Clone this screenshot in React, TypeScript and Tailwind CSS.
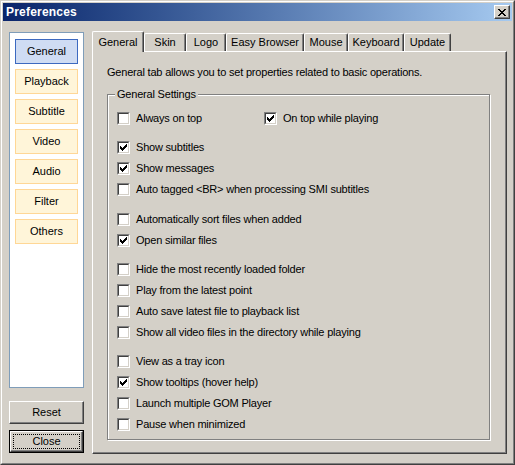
import React from 'react';

const FONT = { fontFamily: '"Liberation Sans", Arial, sans-serif' };

const sideItems = ['General', 'Playback', 'Subtitle', 'Video', 'Audio', 'Filter', 'Others'];

const tabs = [
  { label: 'General', w: 'w-[52px]' },
  { label: 'Skin', w: 'w-[42px]' },
  { label: 'Logo', w: 'w-[40px]' },
  { label: 'Easy Browser', w: 'w-[78px]' },
  { label: 'Mouse', w: 'w-[44px]' },
  { label: 'Keyboard', w: 'w-[56px]' },
  { label: 'Update', w: 'w-[47px]' },
];

// groups of checkbox rows, first row of first group holds two boxes
const groups: { label: string; checked: boolean }[][] = [
  [
    { label: 'Show subtitles', checked: true },
    { label: 'Show messages', checked: true },
    { label: 'Auto tagged <BR> when processing SMI subtitles', checked: false },
  ],
  [
    { label: 'Automatically sort files when added', checked: false },
    { label: 'Open similar files', checked: true },
  ],
  [
    { label: 'Hide the most recently loaded folder', checked: false },
    { label: 'Play from the latest point', checked: false },
    { label: 'Auto save latest file to playback list', checked: false },
    { label: 'Show all video files in the directory while playing', checked: false },
  ],
  [
    { label: 'View as a tray icon', checked: false },
    { label: 'Show tooltips (hover help)', checked: true },
    { label: 'Launch multiple GOM Player', checked: false },
    { label: 'Pause when minimized', checked: false },
  ],
];

function CheckBox({ checked }: { checked: boolean }) {
  return (
    <span className="w-[13px] h-[13px] shrink-0 border border-t-[#808080] border-l-[#808080] border-r-white border-b-white">
      <span className="flex w-full h-full items-center justify-center bg-white border border-t-[#404040] border-l-[#404040] border-r-[#d4d0c8] border-b-[#d4d0c8]">
        {checked && (
          <svg width="7" height="7" viewBox="0 0 7 7" shapeRendering="crispEdges">
            <path d="M0 2h1v3H0zM1 3h1v3H1zM2 4h1v3H2zM3 3h1v3H3zM4 2h1v3H4zM5 1h1v3H5zM6 0h1v3H6z" fill="#000" />
          </svg>
        )}
      </span>
    </span>
  );
}

function Row({ label, checked, className = '' }: { label: string; checked: boolean; className?: string }) {
  return (
    <div className={`flex h-[21px] items-center ${className}`}>
      <CheckBox checked={checked} />
      <span className="ml-[6px] text-[11px] leading-[13px] tracking-[-0.2px] text-black whitespace-nowrap">{label}</span>
    </div>
  );
}

export default function App() {
  return (
    <div style={FONT} className="w-[515px] h-[465px] bg-[#d4d0c8] border border-t-[#d4d0c8] border-l-[#d4d0c8] border-r-[#404040] border-b-[#404040]">
      <div className="h-full border border-t-white border-l-white border-r-[#808080] border-b-[#808080] p-[1px] flex flex-col">
        {/* Title bar */}
        <div className="h-[18px] flex items-center justify-between bg-gradient-to-r from-[#0a246a] to-[#a6caf0] pl-[3px] pr-[2px]">
          <span className="text-white font-bold text-[12px] leading-[14px] tracking-[0.2px]">Preferences</span>
          <button className="w-[16px] h-[14px] bg-[#d4d0c8] border border-t-white border-l-white border-r-[#404040] border-b-[#404040] shadow-[inset_-1px_-1px_0_#808080] flex items-center justify-center">
            <svg width="8" height="7" viewBox="0 0 8 7" shapeRendering="crispEdges">
              <path d="M0 0h2v1H0zM6 0h2v1H6zM1 1h2v1H1zM5 1h2v1H5zM2 2h4v1H2zM3 3h2v1H3zM2 4h4v1H2zM1 5h2v1H1zM5 5h2v1H5zM0 6h2v1H0zM6 6h2v1H6z" fill="#000" />
            </svg>
          </button>
        </div>

        {/* Body */}
        <div className="flex flex-1 pl-[6px] pr-[5px] pt-[10px]">
          {/* Left column */}
          <div className="w-[75px] flex flex-col mt-[1px]">
            <div className="h-[356px] bg-white border border-[#7f9db9] pt-[6px] px-[5px] flex flex-col gap-[5px]">
              {sideItems.map((item, i) => (
                <div
                  key={item}
                  className={`h-[25px] flex items-center justify-center text-[11px] text-black border ${
                    i === 0 ? 'bg-[#cfdcf3] border-[#3c69c0]' : 'bg-[#fff5d9] border-[#ffd796]'
                  }`}
                >
                  {item}
                </div>
              ))}
            </div>
            <button className="mt-[13px] h-[23px] bg-[#d4d0c8] border border-t-white border-l-white border-r-[#404040] border-b-[#404040] shadow-[inset_-1px_-1px_0_#808080] text-[11px] text-black">
              Reset
            </button>
            <button className="mt-[6px] h-[23px] bg-[#d4d0c8] border border-black p-0">
              <div className="h-full border border-t-white border-l-white border-r-[#404040] border-b-[#404040] shadow-[inset_-1px_-1px_0_#808080] p-[2px]">
                <div className="h-full border border-dotted border-black flex items-center justify-center text-[11px] text-black">
                  Close
                </div>
              </div>
            </button>
          </div>

          {/* Tab control */}
          <div className="ml-[8px] w-[415px] flex flex-col">
            <div className="h-[20px] flex items-end">
              {tabs.map((t, i) =>
                i === 0 ? (
                  <div
                    key={t.label}
                    className={`${t.w} h-[21px] -mb-[1px] relative z-10 bg-[#d4d0c8] border-t border-l border-r border-t-white border-l-white border-r-[#404040] shadow-[inset_-1px_0_0_#808080] rounded-t-[2px] flex items-start justify-center pt-[2px] text-[11px] text-black`}
                  >
                    {t.label}
                  </div>
                ) : (
                  <div
                    key={t.label}
                    className={`${t.w} h-[18px] bg-[#d4d0c8] border-t border-l border-r border-t-white border-l-white border-r-[#404040] shadow-[inset_-1px_0_0_#808080] rounded-t-[2px] flex items-center justify-center text-[11px] text-black`}
                  >
                    {t.label}
                  </div>
                )
              )}
            </div>
            <div className="h-[403px] border border-t-white border-l-white border-r-[#404040] border-b-[#404040] shadow-[inset_-1px_-1px_0_#808080] pl-[14px] pt-[14px]">
              <p className="text-[11px] leading-[13px] tracking-[-0.2px] text-black">
                General tab allows you to set properties related to basic operations.
              </p>
              <div className="relative mt-[15px] w-[383px] border border-[#808080] shadow-[inset_1px_1px_0_#ffffff,1px_1px_0_#ffffff] pl-[9px] pt-[13px] pb-[4px]">
                <span className="absolute -top-[7px] left-[7px] px-[2px] bg-[#d4d0c8] text-[11px] leading-[13px] tracking-[-0.2px] text-black">
                  General Settings
                </span>
                <div className="flex">
                  <Row label="Always on top" checked={false} className="w-[147px]" />
                  <Row label="On top while playing" checked={true} />
                </div>
                {groups.map((g, gi) => (
                  <div key={gi} className={gi === 1 ? 'mt-[9px]' : 'mt-[8px]'}>
                    {g.map((r) => (
                      <Row key={r.label} label={r.label} checked={r.checked} />
                    ))}
                  </div>
                ))}
              </div>
            </div>
          </div>
        </div>
      </div>
    </div>
  );
}
